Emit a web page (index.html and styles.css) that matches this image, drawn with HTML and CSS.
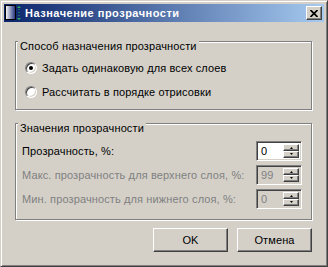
FILE: index.html
```html
<!DOCTYPE html>
<html lang="ru">
<head>
  <meta charset="UTF-8" />
  <title>Назначение прозрачности</title>
  <link rel="stylesheet" href="styles.css">
</head>
<body>
  <div class="window">
    <div class="titlebar">
      <svg class="app-icon" width="16" height="16" viewBox="0 0 16 16">
        <defs>
          <linearGradient id="pg" x1="0" y1="0" x2="1" y2="0">
            <stop offset="0" stop-color="#ffffff" />
            <stop offset="1" stop-color="#1c2c78" />
          </linearGradient>
        </defs>
        <rect x="0.5" y="0.5" width="10" height="14" fill="url(#pg)" stroke="#000" />
        <polygon points="12,3 14,1 16,3" fill="#2fb060" />
        <polygon points="12,13 14,15 16,13" fill="#2fb060" />
        <line x1="14" y1="4" x2="14" y2="12" stroke="#2fb060" stroke-dasharray="1 2" />
      </svg>
      <span class="title">Назначение прозрачности</span>
      <span class="close-btn">
        <svg width="8" height="7" viewBox="0 0 8 7">
          <path d="M0.5 0 L7.5 7 M7.5 0 L0.5 7" stroke="#000" stroke-width="1.7" />
        </svg>
      </span>
    </div>

    <div class="content">
      <div class="group group-mode">
        <div class="group-title">Способ назначения прозрачности</div>
        <div class="radio-row"><span class="radio checked"></span>Задать одинаковую для всех слоев</div>
        <div class="radio-row"><span class="radio"></span>Рассчитать в порядке отрисовки</div>
      </div>

      <div class="group group-values">
        <div class="group-title">Значения прозрачности</div>
        <div class="field-row">
          <span class="field-label">Прозрачность, %:</span>
          <div class="spin">
            <span class="spin-value">0</span>
            <span class="spin-buttons">
              <span class="spin-btn"><svg width="5" height="3" viewBox="0 0 5 3"><polygon points="1,3 2.5,1 4,3" /></svg></span>
              <span class="spin-btn"><svg width="5" height="3" viewBox="0 0 5 3"><polygon points="1,0 2.5,2 4,0" /></svg></span>
            </span>
          </div>
        </div>
        <div class="field-row disabled">
          <span class="field-label">Макс. прозрачность для верхнего слоя, %:</span>
          <div class="spin">
            <span class="spin-value">99</span>
            <span class="spin-buttons">
              <span class="spin-btn"><svg width="5" height="3" viewBox="0 0 5 3"><polygon points="1,3 2.5,1 4,3" /></svg></span>
              <span class="spin-btn"><svg width="5" height="3" viewBox="0 0 5 3"><polygon points="1,0 2.5,2 4,0" /></svg></span>
            </span>
          </div>
        </div>
        <div class="field-row disabled">
          <span class="field-label">Мин. прозрачность для нижнего слоя, %:</span>
          <div class="spin">
            <span class="spin-value">0</span>
            <span class="spin-buttons">
              <span class="spin-btn"><svg width="5" height="3" viewBox="0 0 5 3"><polygon points="1,3 2.5,1 4,3" /></svg></span>
              <span class="spin-btn"><svg width="5" height="3" viewBox="0 0 5 3"><polygon points="1,0 2.5,2 4,0" /></svg></span>
            </span>
          </div>
        </div>
      </div>

      <div class="buttons">
        <button class="btn">OK</button>
        <button class="btn">Отмена</button>
      </div>
    </div>
  </div>
</body>
</html>
```

FILE: styles.css
```css
body {
  margin: 0;
  font-family: "Liberation Sans", Arial, sans-serif;
  font-size: 11px;
  letter-spacing: 0.12px;
  color: #000;
}
.window {
  width: 328px;
  height: 267px;
  box-sizing: border-box;
  background: #d4d0c8;
  border: 1px solid;
  border-color: #d4d0c8 #404040 #404040 #d4d0c8;
  box-shadow: inset 1px 1px 0 #fff, inset -1px -1px 0 #808080;
  padding: 3px;
}
.titlebar {
  height: 18px;
  display: flex;
  align-items: center;
  background: linear-gradient(to right, #0a246a, #a6caf0);
  color: #fff;
}
.app-icon {
  margin-left: 1px;
  flex: none;
}
.title {
  margin-left: 4px;
  font-weight: bold;
  letter-spacing: 0.5px;
  line-height: 18px;
  flex: 1;
}
.close-btn {
  width: 16px;
  height: 14px;
  box-sizing: border-box;
  margin-right: 2px;
  background: #d4d0c8;
  border: 1px solid;
  border-color: #fff #404040 #404040 #fff;
  box-shadow: inset -1px -1px 0 #808080;
  display: flex;
  align-items: center;
  justify-content: center;
}
.content {
  padding: 0 12px 0 11px;
}
.group {
  box-sizing: border-box;
  border: 1px solid #808080;
  box-shadow: 1px 1px 0 #fff, inset 1px 1px 0 #fff;
}
.group-mode {
  margin-top: 19px;
  height: 69px;
}
.group-values {
  margin-top: 13px;
  height: 97px;
}
.group-title {
  display: table;
  margin: -2px 0 0 2px;
  padding: 0 2px;
  line-height: 13px;
  background: #d4d0c8;
}
.radio-row {
  height: 24px;
  display: flex;
  align-items: center;
}
.group-mode .group-title {
  margin-bottom: 3px;
}
.radio {
  width: 12px;
  height: 12px;
  box-sizing: border-box;
  margin: 0 5px 0 9px;
  border-radius: 50%;
  background: #fff;
  border: 1px solid;
  border-color: #808080 #fff #fff #808080;
  box-shadow: inset 1px 1px 0 #404040, inset -1px -1px 0 #d4d0c8;
  display: flex;
  align-items: center;
  justify-content: center;
}
.radio.checked::after {
  content: "";
  width: 4px;
  height: 4px;
  border-radius: 50%;
  background: #000;
}
.group-values .group-title {
  margin-bottom: 4px;
}
.field-row {
  height: 24px;
  display: flex;
  align-items: center;
  padding: 0 9px 0 6px;
}
.field-label {
  flex: 1;
}
.field-row.disabled .field-label {
  color: #808080;
}
.spin {
  width: 46px;
  height: 20px;
  box-sizing: border-box;
  display: flex;
  border: 1px solid;
  border-color: #808080 #fff #fff #808080;
  box-shadow: inset 1px 1px 0 #404040, inset -1px -1px 0 #d4d0c8;
  padding: 2px;
  background: #fff;
}
.field-row.disabled .spin {
  background: #d4d0c8;
}
.spin-value {
  flex: 1;
  line-height: 14px;
  padding-left: 2px;
}
.field-row.disabled .spin-value {
  color: #808080;
}
.spin-buttons {
  width: 16px;
  display: flex;
  flex-direction: column;
}
.spin-btn {
  flex: 1;
  box-sizing: border-box;
  background: #d4d0c8;
  border: 1px solid;
  border-color: #fff #404040 #404040 #fff;
  box-shadow: inset -1px -1px 0 #808080;
  display: flex;
  align-items: center;
  justify-content: center;
}
.spin-btn svg {
  fill: #000;
}
.buttons {
  margin-top: 8px;
  display: flex;
  justify-content: flex-end;
  gap: 9px;
}
.btn {
  width: 75px;
  height: 24px;
  box-sizing: border-box;
  font-family: inherit;
  font-size: 11px;
  letter-spacing: 0.12px;
  color: #000;
  background: #d4d0c8;
  border: 1px solid;
  border-color: #fff #404040 #404040 #fff;
  box-shadow: inset -1px -1px 0 #808080;
  padding: 0;
}
```
